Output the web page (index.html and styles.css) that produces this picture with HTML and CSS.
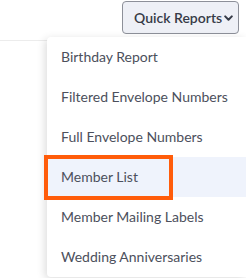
FILE: index.html
```html
<!DOCTYPE html>
<html lang="en">
<head>
    <meta charset="UTF-8">
    <meta name="viewport" content="width=device-width, initial-scale=1.0">
    <title>Quick Reports</title>
    <link rel="stylesheet" href="styles.css">
</head>
<body>
    <div class="toolbar">
        <div class="reports">
            <button type="button" class="reports-btn">
                Quick Reports
                <svg class="chevron" width="9" height="7" viewBox="0 0 9 7" aria-hidden="true">
                    <path d="M1.2 1.4 L4.5 4.7 L7.8 1.4" fill="none" stroke="currentColor" stroke-width="2" stroke-linecap="round" stroke-linejoin="round"/>
                </svg>
            </button>

            <ul class="reports-menu">
                <li class="menu-item">Birthday Report</li>
                <li class="menu-item">Filtered Envelope Numbers</li>
                <li class="menu-item">Full Envelope Numbers</li>
                <li class="menu-item active">Member List</li>
                <li class="menu-item">Member Mailing Labels</li>
                <li class="menu-item">Wedding Anniversaries</li>
            </ul>
        </div>
    </div>

    <!-- Repère autour de l'élément survolé -->
    <div class="focus-mark"></div>
</body>
</html>
```

FILE: styles.css
```css
* {
    margin: 0;
    padding: 0;
    box-sizing: border-box;
}

body {
    font-family: Lato, 'Open Sans', sans-serif;
    background: white;
    width: 246px;
    height: 278px;
    overflow: hidden;
    position: relative;
}

.toolbar {
    height: 41px;
    border-bottom: 1px solid #ececec;
    display: flex;
    justify-content: flex-end;
    align-items: flex-start;
    padding: 1px 7px 0 0;
}

.reports {
    position: relative;
}

.reports-btn {
    display: flex;
    align-items: center;
    gap: 2px;
    width: 117px;
    height: 33px;
    padding: 0 0 0 11px;
    background: #eef0f6;
    border: 1px solid #8d9099;
    border-radius: 4px;
    color: #363b47;
    font-family: inherit;
    font-size: 14px;
    font-weight: 600;
    cursor: pointer;
}

.chevron {
    margin-top: 1px;
}

.reports-menu {
    list-style: none;
    position: absolute;
    top: 36px;
    left: -75px;
    right: -7px;
    padding: 0;
    background: white;
    border-radius: 4px 0 0 4px;
    box-shadow: -2px 2px 8px rgba(0,0,0,0.14);
}

.menu-item {
    height: 40px;
    line-height: 40px;
    padding-left: 14px;
    color: #4c505c;
    font-size: 14px;
    white-space: nowrap;
}

.menu-item.active {
    background: #eff3fc;
}

.focus-mark {
    position: absolute;
    left: 44px;
    top: 155px;
    width: 129px;
    height: 45px;
    border: 4px solid #ff5c0a;
}
```
